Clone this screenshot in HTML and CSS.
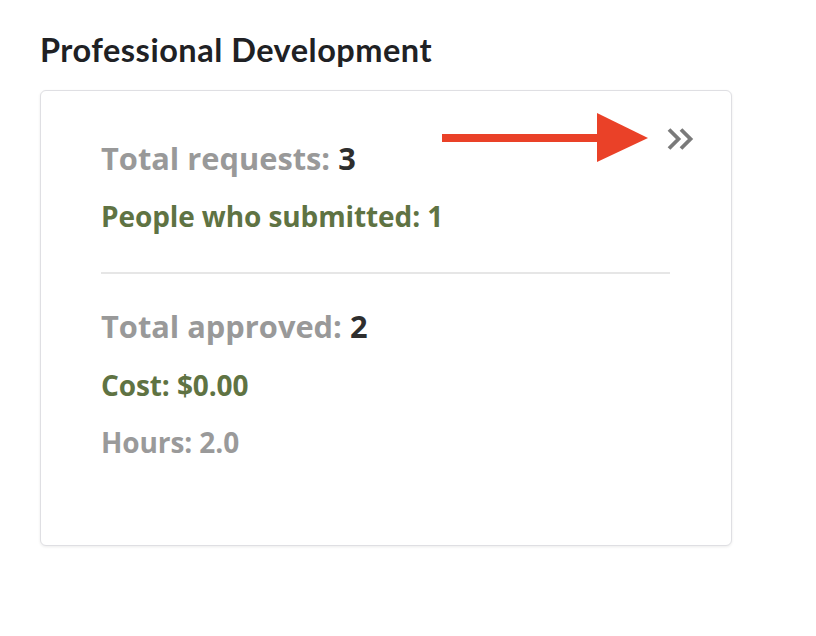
FILE: index.html
```html
<!DOCTYPE html>
<html lang="en">
<head>
<meta charset="utf-8">
<title>Professional Development</title>
<link rel="stylesheet" href="styles.css">
</head>
<body>
<main class="page">
  <h1 class="title">Professional Development</h1>
  <section class="card">
    <a class="more" href="#" aria-label="View details">
      <svg width="28" height="22" viewBox="0 0 28 22" aria-hidden="true">
        <path d="M3 1.5 L12.5 11 L3 20.5" fill="none" stroke="#7a7a7a" stroke-width="3.8"/>
        <path d="M15 1.5 L24.5 11 L15 20.5" fill="none" stroke="#7a7a7a" stroke-width="3.8"/>
      </svg>
    </a>
    <div class="group">
      <p class="stat">Total requests: <span class="num">3</span></p>
      <p class="sub">People who submitted: 1</p>
    </div>
    <hr class="divider">
    <div class="group">
      <p class="stat">Total approved: <span class="num">2</span></p>
      <p class="sub">Cost: $0.00</p>
      <p class="muted">Hours: 2.0</p>
    </div>
  </section>
  <svg class="annotation" width="206" height="50" viewBox="0 0 206 50" aria-hidden="true">
    <rect x="0" y="21" width="158" height="8" fill="#ea4128"/>
    <polygon points="155,0 206,25 155,49" fill="#ea4128"/>
  </svg>
</main>
</body>
</html>
```

FILE: styles.css
```css
* { box-sizing: border-box; }
html, body { margin: 0; padding: 0; background: #ffffff; }
body {
  font-family: "Open Sans", "Liberation Sans", sans-serif;
  width: 816px;
  height: 636px;
  overflow: hidden;
}
.page {
  position: relative;
  padding: 30.5px 0 0 40px;
}
.title {
  margin: 0;
  font-family: "Lato", sans-serif;
  font-weight: 700;
  font-size: 32.5px;
  line-height: 38px;
  color: #202124;
  letter-spacing: 0.5px;
}
.card {
  position: relative;
  margin-top: 21.5px;
  width: 692px;
  height: 456px;
  border: 1px solid #dfdfe3;
  border-radius: 6px;
  box-shadow: 0 1px 3px rgba(0, 0, 0, 0.08);
  padding: 47px 61px 0 60px;
  background: #fff;
}
.more {
  position: absolute;
  top: 37px;
  right: 37px;
  display: block;
  width: 28px;
  height: 22px;
}
.more svg { display: block; }
.group p { margin: 0; font-weight: 700; }
.stat {
  font-size: 30.8px;
  line-height: 40px;
  color: #999999;
}
.group .stat + .sub { margin-top: 21px; }
.group:last-child .stat { margin-top: 32px; }
.group:last-child .stat + .sub { margin-top: 22px; }
.num { color: #2e2e2e; }
.sub {
  font-size: 28px;
  line-height: 34px;
  color: #5f7343;
  letter-spacing: -0.1px;
}
.group .muted {
  margin-top: 23px;
  font-size: 28px;
  line-height: 34px;
  color: #9a9a9a;
  letter-spacing: -0.1px;
}
.divider {
  margin: 39px 0 0;
  border: 0;
  height: 2px;
  background: #e6e6e6;
}
.annotation {
  position: absolute;
  left: 442px;
  top: 113px;
}
```
